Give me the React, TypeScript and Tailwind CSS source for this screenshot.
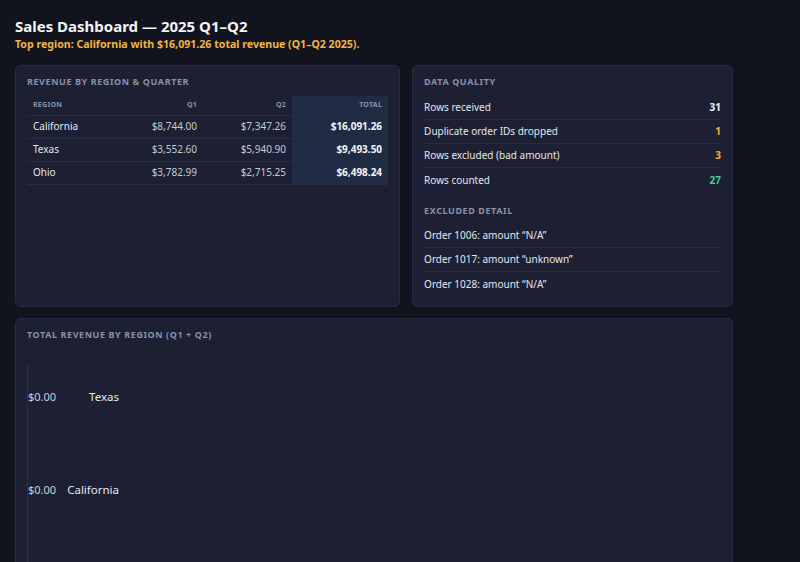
const quarters = [
  { region: "California", q1: "$8,744.00", q2: "$7,347.26", total: "$16,091.26" },
  { region: "Texas", q1: "$3,552.60", q2: "$5,940.90", total: "$9,493.50" },
  { region: "Ohio", q1: "$3,782.99", q2: "$2,715.25", total: "$6,498.24" },
];

const quality = [
  { label: "Rows received", value: "31", tone: "text-[#eef1f6]" },
  { label: "Duplicate order IDs dropped", value: "1", tone: "text-[#f2b441]" },
  { label: "Rows excluded (bad amount)", value: "3", tone: "text-[#f2b441]" },
  { label: "Rows counted", value: "27", tone: "text-[#3ccf9b]" },
];

const excluded = [
  "Order 1006: amount \u201cN/A\u201d",
  "Order 1017: amount \u201cunknown\u201d",
  "Order 1028: amount \u201cN/A\u201d",
];

// chart rows as the chart currently renders them (values come through as zero)
const bars = [
  { region: "Texas", value: "$0.00" },
  { region: "California", value: "$0.00" },
];

function CardTitle({ children, className = "" }: { children: React.ReactNode; className?: string }) {
  return (
    <h2
      className={`text-[9px] leading-[14px] font-bold uppercase tracking-[0.065em] text-[#8792ab] ${className}`}
    >
      {children}
    </h2>
  );
}

export default function App() {
  return (
    <div className="min-h-screen bg-[#11131d] font-['Noto_Sans',sans-serif] px-[15px] pt-4 text-[#e3e7ef]">
      <div className="w-[718px]">
        <h1 className="text-[15px] leading-[20px] font-bold text-[#f3f5f9]">
          Sales Dashboard — 2025 Q1–Q2
        </h1>
        <p className="mt-[1px] text-[10.6px] leading-[15px] font-bold text-[#f2b441]">
          Top region: California with $16,091.26 total revenue (Q1–Q2 2025).
        </p>

        <div className="mt-[13px] grid grid-cols-[6fr_5fr] gap-3">
          <section className="rounded-md border border-[#272d40] bg-[#1c2032] px-[11px] pt-[9px] pb-[10px]">
            <CardTitle>Revenue by Region &amp; Quarter</CardTitle>
            <table className="mt-[7px] w-full border-collapse text-[10px]">
              <colgroup>
                <col className="w-[87px]" />
                <col className="w-[89px]" />
                <col className="w-[89px]" />
                <col className="w-[96px]" />
              </colgroup>
              <thead>
                <tr className="border-b border-[#272d40] text-[7px] uppercase tracking-[0.04em] text-[#8792ab]">
                  <th className="h-[19px] px-[6px] text-left font-bold">Region</th>
                  <th className="px-[6px] text-right font-bold">Q1</th>
                  <th className="px-[6px] text-right font-bold">Q2</th>
                  <th className="bg-[#1f2b43] px-[6px] text-right font-bold">Total</th>
                </tr>
              </thead>
              <tbody>
                {quarters.map((r) => (
                  <tr key={r.region} className="border-b border-[#272d40]">
                    <td className="h-[23px] px-[6px] text-[#e3e7ef]">{r.region}</td>
                    <td className="px-[6px] text-right text-[#c4c9d5]">{r.q1}</td>
                    <td className="px-[6px] text-right text-[#c4c9d5]">{r.q2}</td>
                    <td className="bg-[#1f2b43] px-[6px] text-right font-bold text-[#f3f5f9]">
                      {r.total}
                    </td>
                  </tr>
                ))}
              </tbody>
            </table>
          </section>

          <section className="rounded-md border border-[#272d40] bg-[#1c2032] px-[11px] pt-[9px] pb-[10px]">
            <CardTitle>Data Quality</CardTitle>
            <ul className="mt-[7px] text-[10px]">
              {quality.map((q, i) => (
                <li
                  key={q.label}
                  className={`flex h-[24px] items-center justify-between ${
                    i < quality.length - 1 ? "border-b border-[#272d40]" : ""
                  }`}
                >
                  <span>{q.label}</span>
                  <span className={`font-bold ${q.tone}`}>{q.value}</span>
                </li>
              ))}
            </ul>
            <CardTitle className="mt-3">Excluded Detail</CardTitle>
            <ul className="mt-[6px] text-[10px]">
              {excluded.map((e, i) => (
                <li
                  key={e}
                  className={`flex h-[24px] items-center ${
                    i < excluded.length - 1 ? "border-b border-[#272d40]" : ""
                  }`}
                >
                  {e}
                </li>
              ))}
            </ul>
          </section>
        </div>

        <section className="mt-[11px] rounded-md border border-[#272d40] bg-[#1c2032] px-[11px] pt-[9px] pb-4">
          <CardTitle>Total Revenue by Region (Q1 + Q2)</CardTitle>
          <div className="mt-[22px] h-[240px] border-l border-[#2c3244]">
            {bars.map((b) => (
              <div key={b.region} className="h-[93px] pt-[25px]">
                <div className="flex w-[91px] items-center justify-between leading-[16px]">
                  <span className="text-[11px] text-[#ccd1dc]">{b.value}</span>
                  <span className="text-[11.5px] text-[#e6e9f0]">{b.region}</span>
                </div>
              </div>
            ))}
          </div>
        </section>
      </div>
    </div>
  );
}
